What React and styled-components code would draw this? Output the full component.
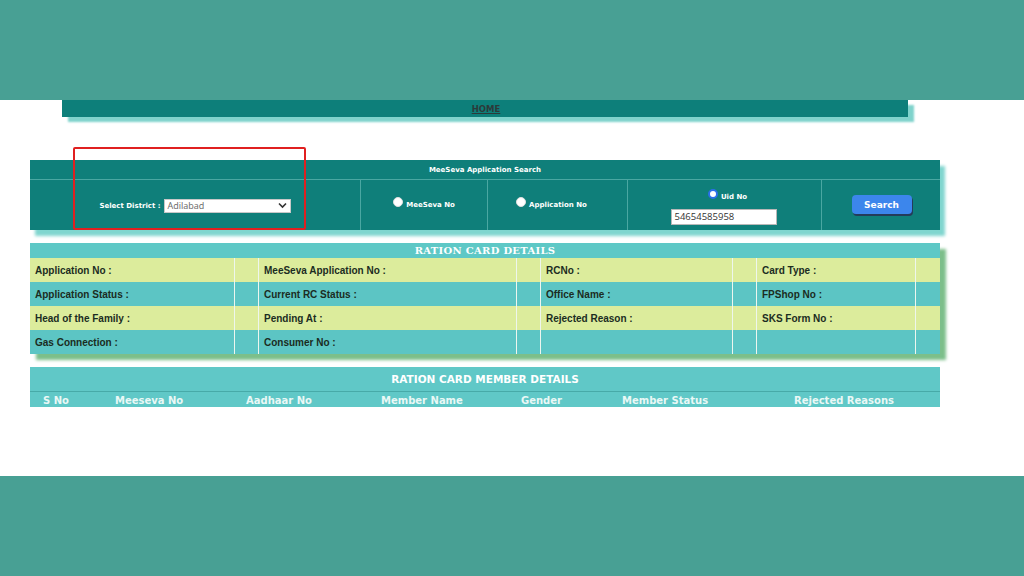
import React from "react";
import styled, { createGlobalStyle } from "styled-components";

const Global = createGlobalStyle`
  html, body { margin: 0; padding: 0; background: #ffffff; }
  body { width: 1024px; height: 576px; overflow: hidden; font-family: "Liberation Sans", Arial, sans-serif; }
`;

const Band = styled.div`
  height: 100px;
  background: #48a094;
`;

const Main = styled.div`
  position: relative;
  height: 376px;
  background: #ffffff;
`;

const NavBar = styled.div`
  margin-left: 62px;
  width: 846px;
  height: 17px;
  background: #0d7f7a;
  box-shadow: 6px 5px 2px #7fd3cc;
  display: flex;
  justify-content: center;
  align-items: center;
`;

const NavLink = styled.a`
  font-family: "DejaVu Sans", Verdana, sans-serif;
  font-size: 8.5px;
  font-weight: bold;
  color: #2c3a3a;
  text-decoration: underline;
  padding-left: 2px;
`;

const SearchPanel = styled.div`
  margin: 43px 0 0 30px;
  width: 910px;
  background: #0f7f7a;
  box-shadow: 5px 6px 3px #80d6cf;
`;

const PanelTitle = styled.div`
  height: 19px;
  border-bottom: 1px solid #4aa7a2;
  display: flex;
  align-items: center;
  justify-content: center;
  font-family: "DejaVu Sans", Verdana, sans-serif;
  font-size: 7px;
  font-weight: bold;
  color: #ffffff;
`;

const SearchRow = styled.div`
  display: grid;
  grid-template-columns: 331px 127px 140px 194px 118px;
  height: 50px;
`;

const SearchCell = styled.div`
  border-right: ${(p) => (p.$last ? "none" : "1px solid #4aa7a2")};
  display: flex;
  flex-direction: ${(p) => (p.$column ? "column" : "row")};
  align-items: center;
  justify-content: center;
  gap: ${(p) => (p.$column ? "7px" : "3px")};
  padding-top: ${(p) => p.$pt || 0}px;
`;

const Label = styled.span`
  font-family: "DejaVu Sans", Verdana, sans-serif;
  font-size: 7px;
  font-weight: bold;
  color: #ffffff;
  white-space: nowrap;
`;

const Select = styled.div`
  width: 127px;
  height: 14px;
  background: #ffffff;
  border: 1px solid #c8c8c8;
  box-sizing: border-box;
  display: flex;
  align-items: center;
  justify-content: space-between;
  padding: 0 3px;
  font-family: "Open Sans", "Liberation Sans", sans-serif;
  font-size: 9px;
  color: #666;
`;

const Radio = styled.span`
  width: 10px;
  height: 10px;
  border-radius: 50%;
  box-sizing: border-box;
  background: #ffffff;
  border: ${(p) => (p.$checked ? "2px solid #2a6fe8" : "1px solid #e0e0e0")};
  display: inline-block;
  transform: translateY(-3px);
`;

const RadioLine = styled.div`
  display: flex;
  align-items: center;
  gap: 3px;
  margin-left: ${(p) => p.$ml || 0}px;
`;

const TextInput = styled.div`
  width: 106px;
  height: 16px;
  background: #ffffff;
  border: 1px solid #b8b8b8;
  box-sizing: border-box;
  padding-left: 3px;
  display: flex;
  align-items: center;
  font-family: "Open Sans", "Liberation Sans", sans-serif;
  font-size: 9.5px;
  color: #333;
  margin-left: -2px;
`;

const SearchButton = styled.button`
  width: 60px;
  height: 19px;
  background: #3c86ec;
  border: none;
  border-radius: 4px;
  box-shadow: 1px 2px 0 #243c5a;
  color: #ffffff;
  font-family: "DejaVu Sans", Verdana, sans-serif;
  font-size: 9px;
  font-weight: bold;
  padding: 0;
  margin-left: 1px;
  margin-bottom: 1px;
`;

const Details = styled.div`
  margin: 13px 0 0 30px;
  width: 910px;
  box-shadow: 6px 6px 3px #7cbf8a;
`;

const DetailsHead = styled.div`
  height: 15px;
  background: #5ec8c6;
  display: flex;
  align-items: center;
  justify-content: center;
  font-family: "DejaVu Serif", "Liberation Serif", serif;
  font-size: 10px;
  font-weight: bold;
  color: #ffffff;
  letter-spacing: 0.3px;
`;

const DetailRow = styled.div`
  display: grid;
  grid-template-columns: 205px 24px 258px 24px 192px 24px 159px 24px;
  height: 24px;
  background: ${(p) => (p.$alt ? "#5cc5c4" : "#dcec9c")};
`;

const DetailCell = styled.div`
  border-right: ${(p) => (p.$last ? "none" : "1px solid #eef6ee")};
  display: flex;
  align-items: center;
  padding-left: 5px;
  font-family: "Liberation Sans", Arial, sans-serif;
  font-size: 10px;
  font-weight: bold;
  color: #1b2c22;
  white-space: nowrap;
`;

const Members = styled.div`
  margin: 13px 0 0 30px;
  width: 910px;
  background: #60c8c7;
`;

const MembersHead = styled.div`
  height: 24px;
  border-bottom: 1px solid #47aaa8;
  display: flex;
  align-items: center;
  justify-content: center;
  font-family: "DejaVu Sans", Verdana, sans-serif;
  font-size: 10.5px;
  font-weight: bold;
  color: #ffffff;
`;

const MemberCols = styled.div`
  display: grid;
  grid-template-columns: 72px 131px 135px 140px 101px 172px 159px;
  height: 15px;
  align-items: center;
`;

const MemberCol = styled.div`
  padding-left: 13px;
  padding-top: 1px;
  font-family: "DejaVu Sans", Verdana, sans-serif;
  font-size: 10px;
  font-weight: bold;
  color: #eaf8f6;
  white-space: nowrap;
`;

const Highlight = styled.div`
  position: absolute;
  left: 73px;
  top: 47px;
  width: 233px;
  height: 83px;
  border: 2px solid #e02020;
  box-sizing: border-box;
  border-radius: 2px;
  pointer-events: none;
`;

const Chevron = () => (
  <svg width="9" height="7" viewBox="0 0 9 7">
    <path d="M1 1.5 L4.5 5 L8 1.5" fill="none" stroke="#333" strokeWidth="1.6" />
  </svg>
);

const detailRows = [
  ["Application No :", "MeeSeva Application No :", "RCNo :", "Card Type :"],
  ["Application Status :", "Current RC Status :", "Office Name :", "FPShop No :"],
  ["Head of the Family :", "Pending At :", "Rejected Reason :", "SKS Form No :"],
  ["Gas Connection :", "Consumer No :", "", ""],
];

const memberCols = ["S No", "Meeseva No", "Aadhaar No", "Member Name", "Gender", "Member Status", "Rejected Reasons"];

export default function App() {
  return (
    <>
      <Global />
      <Band />
      <Main>
        <NavBar>
          <NavLink>HOME</NavLink>
        </NavBar>

        <SearchPanel>
          <PanelTitle>MeeSeva Application Search</PanelTitle>
          <SearchRow>
            <SearchCell $pt={1}>
              <Label>Select District :</Label>
              <Select>
                <span>Adilabad</span>
                <Chevron />
              </Select>
            </SearchCell>
            <SearchCell>
              <RadioLine>
                <Radio />
                <Label>MeeSeva No</Label>
              </RadioLine>
            </SearchCell>
            <SearchCell>
              <RadioLine $ml={-12}>
                <Radio />
                <Label>Application No</Label>
              </RadioLine>
            </SearchCell>
            <SearchCell $column $pt={6}>
              <RadioLine $ml={6}>
                <Radio $checked />
                <Label>Uid No</Label>
              </RadioLine>
              <TextInput>54654585958</TextInput>
            </SearchCell>
            <SearchCell $last>
              <SearchButton>Search</SearchButton>
            </SearchCell>
          </SearchRow>
        </SearchPanel>

        <Details>
          <DetailsHead>RATION CARD DETAILS</DetailsHead>
          {detailRows.map((row, i) => (
            <DetailRow key={i} $alt={i % 2 === 1}>
              <DetailCell>{row[0]}</DetailCell>
              <DetailCell />
              <DetailCell>{row[1]}</DetailCell>
              <DetailCell />
              <DetailCell>{row[2]}</DetailCell>
              <DetailCell />
              <DetailCell>{row[3]}</DetailCell>
              <DetailCell $last />
            </DetailRow>
          ))}
        </Details>

        <Members>
          <MembersHead>RATION CARD MEMBER DETAILS</MembersHead>
          <MemberCols>
            {memberCols.map((c) => (
              <MemberCol key={c}>{c}</MemberCol>
            ))}
          </MemberCols>
        </Members>

        <Highlight />
      </Main>
      <Band />
    </>
  );
}
